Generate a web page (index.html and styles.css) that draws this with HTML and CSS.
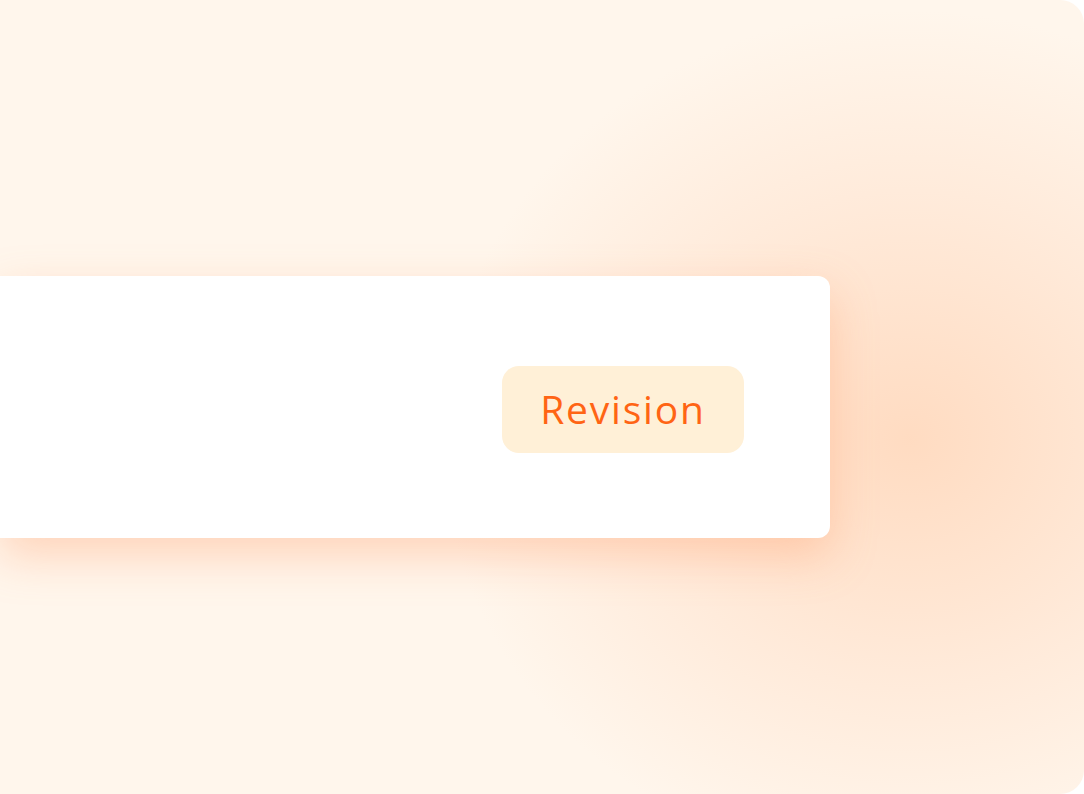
FILE: index.html
```html
<!DOCTYPE html>
<html>
<head>
<meta charset="utf-8">
<link rel="stylesheet" href="styles.css">
</head>
<body>
<div class="frame">
  <div class="card">
    <span class="badge">Revision</span>
  </div>
</div>
</body>
</html>
```
FILE: styles.css
```css
html, body {
  margin: 0;
  padding: 0;
  background: #ffffff;
}
.frame {
  width: 1084px;
  height: 794px;
  box-sizing: border-box;
  padding-top: 276px;
  border-radius: 0 24px 24px 0;
  overflow: hidden;
  background:
    radial-gradient(ellipse 470px 430px at 910px 440px, rgba(255, 208, 175, 0.7), rgba(255, 215, 188, 0.38) 55%, rgba(255, 240, 225, 0) 100%),
    #fff6ec;
}
.card {
  width: 830px;
  height: 262px;
  box-sizing: border-box;
  background: #ffffff;
  border-radius: 0 12px 12px 0;
  box-shadow: 0 18px 45px rgba(255, 150, 95, 0.35);
  display: flex;
  justify-content: flex-end;
  align-items: flex-start;
  padding: 90px 86px 0 0;
}
.badge {
  width: 242px;
  height: 87px;
  box-sizing: border-box;
  background: #fff0d7;
  border-radius: 17px;
  color: #ff6414;
  font-family: "Open Sans", sans-serif;
  font-size: 39px;
  letter-spacing: 1.8px;
  display: flex;
  align-items: center;
  justify-content: center;
  padding-bottom: 2px;
}
```
